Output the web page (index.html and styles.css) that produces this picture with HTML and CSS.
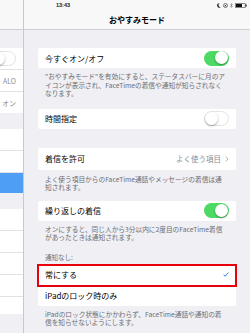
FILE: index.html
```html
<!doctype html>
<html>
<head>
<meta charset="utf-8">
<link rel="stylesheet" href="styles.css">
<title>おやすみモード</title>
</head>
<body>
<div class="screen">
  <aside class="master">
    <div class="bar"></div>
    <div class="group first">
      <div class="row"><span class="switch off"></span></div>
      <div class="row"><span class="detail-text">ALO</span></div>
      <div class="row"><span class="detail-text">オン</span></div>
    </div>
    <div class="group">
      <div class="row"></div>
      <div class="row"></div>
      <div class="row selected"></div>
    </div>
    <div class="group">
      <div class="row"></div>
      <div class="row"></div>
      <div class="row"></div>
      <div class="row"></div>
      <div class="row short"></div>
    </div>
  </aside>

  <main class="detail">
    <div class="bar">
      <div class="status">
        <span class="time">13:43</span>
        <span class="icons">
          <svg width="4" height="5" viewBox="0 0 4 5"><path d="M3 0.3A2.2 2.2 0 1 0 3.8 4 1.8 1.8 0 0 1 3 0.3z" fill="#222"/></svg>
          <svg width="5" height="5" viewBox="0 0 5 5"><circle cx="2.5" cy="2.5" r="2" fill="none" stroke="#444" stroke-width="0.7"/><rect x="1.8" y="2" width="1.4" height="1.3" fill="#444"/></svg>
          <svg width="3" height="5" viewBox="0 0 3 5"><path d="M0.3 1.3L2.4 3.5 1.4 4.5V0.5L2.4 1.5 0.3 3.7" fill="none" stroke="#666" stroke-width="0.5"/></svg>
          <svg width="12" height="5" viewBox="0 0 12 5"><rect x="0.3" y="0.3" width="10" height="4.4" rx="0.6" fill="none" stroke="#111" stroke-width="0.6"/><rect x="1" y="1" width="6" height="3" fill="#111"/><rect x="10.6" y="1.5" width="1" height="2" fill="#111"/></svg>
        </span>
      </div>
      <div class="title">おやすみモード</div>
    </div>

    <div class="card first">
      <div class="cell"><span>今すぐオン/オフ</span><span class="switch on"></span></div>
    </div>
    <p class="note">"おやすみモード"を有効にすると、ステータスバーに月のア<br>イコンが表示され、FaceTimeの着信や通知が知らされなく<br>なります。</p>

    <div class="card">
      <div class="cell"><span>時間指定</span><span class="switch off"></span></div>
    </div>

    <div class="card spaced">
      <div class="cell tall"><span>着信を許可</span><span class="value">よく使う項目 <svg width="4" height="6" viewBox="0 0 4 6"><path d="M0.6 0.6L3 3 0.6 5.4" fill="none" stroke="#a8a8ad" stroke-width="0.8"/></svg></span></div>
    </div>
    <p class="note loose">よく使う項目からのFaceTime通話やメッセージの着信は通<br>知されます。</p>

    <div class="card close">
      <div class="cell"><span>繰り返しの着信</span><span class="switch on"></span></div>
    </div>
    <p class="note">オンにすると、同じ人から3分以内に2度目のFaceTime着信<br>があったときは通知されます。</p>

    <p class="section">通知なし:</p>
    <div class="card tight">
      <div class="cell marked"><span>常にする</span><svg width="6" height="5" viewBox="0 0 6 5"><path d="M0.6 2.8L2.2 4.2 5.4 0.6" fill="none" stroke="#1a7cf5" stroke-width="0.9"/></svg></div>
      <div class="cell"><span>iPadのロック時のみ</span></div>
    </div>
    <p class="note">iPadのロック状態にかかわらず、FaceTime通話や通知の着<br>信を知らせないようにします。</p>
  </main>
</div>
</body>
</html>
```

FILE: styles.css
```css
body {
    margin: 0;
    font-family: "Noto Sans CJK JP", "Noto Sans", sans-serif;
    color: #000;
}
p {
    margin: 0;
}
.screen {
    display: flex;
    width: 250px;
    height: 333px;
    overflow: hidden;
    background-color: #efeff4;
}

/* left list */
.master {
    width: 23px;
    flex: none;
    overflow: hidden;
    border-right: 1px solid #c8c7cc;
}
.bar {
    height: 30px;
    box-sizing: border-box;
    background-color: #f8f8f8;
    border-bottom: 1px solid #d0d0d4;
}
.group {
    margin-top: 16px;
    background-color: #fff;
}
.group.first {
    margin-top: 18px;
}
.row {
    height: 21px;
    border-bottom: 1px solid #e2e2e6;
    display: flex;
    align-items: center;
    justify-content: flex-end;
    padding-right: 7px;
}
.row:last-child {
    border-bottom: 0;
}
.row.selected {
    height: 20px;
    background-color: #4f9ef5;
}
.row.short {
    height: 17px;
}
.detail-text {
    font-size: 7px;
    color: #8e8e93;
    white-space: nowrap;
}

/* right pane */
.detail {
    flex: 1;
}
.status {
    height: 10px;
    display: flex;
    align-items: center;
    justify-content: space-between;
    padding: 0 3px 0 32px;
}
.time {
    font-family: "Liberation Sans", sans-serif;
    font-size: 5.5px;
    font-weight: bold;
    color: #222;
}
.icons {
    display: flex;
    align-items: center;
    gap: 2px;
}
.icons svg {
    display: block;
}
.title {
    height: 19px;
    display: flex;
    align-items: center;
    justify-content: center;
    font-size: 8px;
    font-weight: bold;
}
.card {
    margin: 11px 14px 0;
    background-color: #fff;
    border-radius: 2px;
}
.card.first {
    margin-top: 18px;
}
.card.spaced {
    margin-top: 19px;
}
.card.close {
    margin-top: 9px;
}
.card.tight {
    margin-top: 3px;
}
.cell {
    height: 20px;
    display: flex;
    align-items: center;
    justify-content: space-between;
    padding: 0 7px;
    font-size: 8px;
    border-bottom: 1px solid #e2e2e6;
}
.cell.tall {
    height: 22px;
}
.cell:last-child {
    border-bottom: 0;
}
.cell.marked {
    outline: 2px solid #e8000b;
    outline-offset: -1px;
}
.value {
    display: flex;
    align-items: center;
    gap: 4px;
    font-size: 7.5px;
    color: #8e8e93;
}
.switch {
    position: relative;
    width: 25px;
    height: 15px;
    flex: none;
    box-sizing: border-box;
    border-radius: 8px;
}
.switch::after {
    content: "";
    position: absolute;
    top: 0.5px;
    width: 13px;
    height: 13px;
    border-radius: 50%;
    background-color: #fff;
    box-shadow: 0 1px 2px rgba(0, 0, 0, 0.35);
}
.switch.on {
    background-color: #4cd964;
}
.switch.on::after {
    right: 1px;
}
.switch.off {
    border: 1px solid #e3e3e6;
    background-color: #fff;
}
.switch.off::after {
    top: 0;
    left: 0;
}
.note {
    padding: 4px 12px 0 21px;
    font-size: 6.7px;
    line-height: 8.5px;
    color: #6d6d72;
    white-space: nowrap;
}
.note.loose {
    padding-top: 5px;
}
.section {
    margin-top: 11px;
    padding-left: 21px;
    font-size: 6.5px;
    line-height: 9px;
    color: #6d6d72;
}
```
